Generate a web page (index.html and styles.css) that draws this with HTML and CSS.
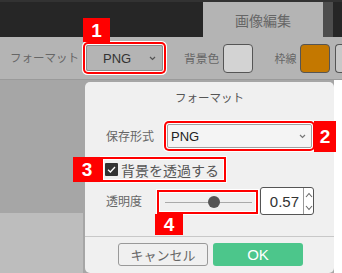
FILE: index.html
```html
<!DOCTYPE html>
<html lang="ja">
<head>
<meta charset="utf-8">
<link rel="stylesheet" href="styles.css">
</head>
<body>
<div class="top">
  <div class="tab">画像編集</div>
  <div class="tab-edge"></div>
</div>
<div class="toolbar">
  <span class="tlabel">フォーマット</span>
  <div class="tsel hl">
    <span class="tsel-text">PNG</span>
    <svg class="chev" width="7" height="5" viewBox="0 0 7 5"><path d="M1 1 L3.5 3.5 L6 1" fill="none" stroke="#555" stroke-width="1.2"/></svg>
    <span class="badge b1">1</span>
  </div>
  <span class="tlabel l2">背景色</span>
  <span class="swatch gray"></span>
  <span class="tlabel l3">枠線</span>
  <span class="swatch orange"></span>
  <span class="swatch third"></span>
</div>
<div class="main">
  <div class="left"><div class="left-a"></div><div class="left-b"></div></div>
  <div class="dialog">
    <div class="title">フォーマット</div>
    <div class="row r1">
      <span class="flabel w1">保存形式</span>
      <div class="fsel hl">
        <span>PNG</span>
        <svg class="chev" width="7" height="5" viewBox="0 0 7 5"><path d="M1 1 L3.5 3.5 L6 1" fill="none" stroke="#777" stroke-width="1.2"/></svg>
        <span class="badge b2">2</span>
      </div>
    </div>
    <div class="row r2">
      <label class="check box-hl">
        <span class="cb"><svg width="13" height="13" viewBox="0 0 13 13"><path d="M3 6.8 L5.4 9 L10 4" fill="none" stroke="#fff" stroke-width="1.3"/></svg></span>
        <span class="check-text">背景を透過する</span>
        <span class="badge b3">3</span>
      </label>
    </div>
    <div class="row r3">
      <span class="flabel w2">透明度</span>
      <div class="slider box-hl">
        <div class="track"></div>
        <div class="thumb"></div>
        <span class="badge b4">4</span>
      </div>
      <div class="num">
        <span class="num-val">0.57</span>
        <div class="spin">
          <svg width="8" height="6" viewBox="0 0 8 6"><path d="M1 5 L4 1.5 L7 5" fill="none" stroke="#666" stroke-width="1.1"/></svg>
          <svg width="8" height="6" viewBox="0 0 8 6"><path d="M1 1 L4 4.5 L7 1" fill="none" stroke="#666" stroke-width="1.1"/></svg>
        </div>
      </div>
    </div>
    <div class="footer">
      <button class="btn cancel">キャンセル</button>
      <button class="btn ok">OK</button>
    </div>
  </div>
  <div class="right"></div>
</div>
</body>
</html>
```

FILE: styles.css
```css
* { box-sizing: border-box; }
html, body {
  margin: 0;
  padding: 0;
}
body {
  width: 342px;
  height: 273px;
  overflow: hidden;
  font-family: "Liberation Sans", "Noto Sans CJK JP", sans-serif;
  background: #fff;
}
.top {
  height: 37px;
  background: #262626;
  border-top: 2px solid #323232;
  display: flex;
  justify-content: flex-end;
  padding-right: 9px;
}
.tab {
  width: 120px;
  background: #b4b4b4;
  color: #666;
  font-size: 14px;
  display: flex;
  align-items: center;
  justify-content: center;
  font-family: "Noto Sans CJK JP", sans-serif;
}
.tab-edge {
  width: 10px;
  background: #4d4d4d;
}
.toolbar {
  height: 43px;
  background: #b4b4b4;
  border-bottom: 1px solid #9a9a9a;
  display: flex;
  align-items: center;
  padding-left: 10px;
  white-space: nowrap;
}
.toolbar > * { flex: none; }
.tlabel {
  font-size: 11.5px;
  color: #666;
  font-family: "Noto Sans CJK JP", sans-serif;
  line-height: 1;
}
.l2 { margin-left: 21px; font-size: 11.8px; }
.l3 { margin-left: 21px; font-size: 11px; }
.tsel {
  position: relative;
  margin-left: 7px;
  width: 77px;
  height: 26px;
  border: 1px solid #8c8c8c;
  border-radius: 2px;
  display: flex;
  align-items: center;
  padding-left: 16px;
  padding-right: 6px;
  font-size: 13px;
  color: #333;
}
.tsel-text { flex: 1; }
.hl {
  box-shadow: 0 0 0 1px #fff, 0 0 0 3px #f00, 0 0 0 4px #fff;
}
.box-hl {
  border: 2px solid #f00;
  box-shadow: 0 0 0 1px #fff, inset 0 0 0 1px #fff;
}
.badge {
  position: absolute;
  background: #f00;
  color: #fff;
  font-family: "Liberation Sans", sans-serif;
  font-weight: bold;
  font-size: 19px;
  display: flex;
  align-items: center;
  justify-content: center;
  line-height: 1;
}
.b1 { left: -4px; bottom: 28px; width: 27px; height: 24px; }
.b2 { left: calc(100% + 3px); top: -4px; width: 22px; height: 31px; }
.b3 { left: -30px; top: -2px; width: 28px; height: 25px; }
.b4 { left: -4px; top: 22px; width: 28px; height: 21px; }
.swatch {
  width: 30px;
  height: 29px;
  border: 1px solid #555;
  border-radius: 4px;
  margin-left: 4px;
}
.gray { background: #d3d3d3; }
.orange { background: #c47800; }
.third {
  background: #c8c8c8;
  margin-left: 5px;
  width: 8px;
  border-right: none;
  border-radius: 4px 0 0 4px;
}
.main {
  display: flex;
  height: 193px;
  background: #a6a6a6;
}
.left {
  width: 83px;
  flex: none;
  display: flex;
  flex-direction: column;
}
.left-a { height: 133px; background: #a6a6a6; }
.left-b { flex: 1; background: #bdbdbd; }
.dialog {
  margin-left: 2px;
  margin-top: 2px;
  width: 249px;
  flex: none;
  height: 191px;
  background: #f0f0f0;
  border-radius: 5px;
  padding-left: 21px;
  font-family: "Noto Sans CJK JP", sans-serif;
}
.right {
  flex: 1;
  background: #fff;
}
.title {
  height: 30px;
  margin-left: -21px;
  display: flex;
  align-items: center;
  justify-content: center;
  font-size: 11.5px;
  color: #555;
}
.row {
  display: flex;
  align-items: center;
}
.row > * { flex: none; }
.flabel {
  font-size: 12px;
  color: #666;
  line-height: 1;
}
.w1 { width: 61px; }
.w2 { width: 51px; }
.r1 { margin-top: 12px; height: 24px; }
.fsel {
  position: relative;
  width: 145px;
  height: 24px;
  border: 1px solid #a0a0a0;
  border-radius: 2px;
  background: #f4f4f4;
  display: flex;
  align-items: center;
  justify-content: space-between;
  padding-left: 3px;
  padding-right: 5px;
  font-family: "Liberation Sans", sans-serif;
  font-size: 13px;
  color: #222;
}
.r2 { margin-top: 9px; margin-left: -5px; }
.check {
  position: relative;
  width: 125px;
  height: 25px;
  display: flex;
  align-items: center;
  padding-left: 2px;
}
.cb {
  width: 13px;
  height: 13px;
  background: #333;
  border-radius: 1px;
  display: flex;
  flex: none;
}
.check-text {
  margin-left: 3px;
  font-size: 14px;
  color: #555;
  line-height: 1;
  white-space: nowrap;
}
.r3 { margin-top: 5px; height: 28px; }
.slider {
  position: relative;
  width: 101px;
  height: 24px;
  margin-top: 1px;
}
.track {
  position: absolute;
  left: 6px;
  right: 4px;
  top: 10px;
  height: 1px;
  background: #aaa;
}
.thumb {
  position: absolute;
  left: 49px;
  top: 4px;
  width: 12px;
  height: 12px;
  border-radius: 50%;
  background: #555;
}
.num {
  margin-left: 2px;
  width: 54px;
  height: 28px;
  border: 1px solid #555;
  border-radius: 3px;
  background: #fff;
  display: flex;
  align-items: center;
}
.num-val {
  flex: 1;
  text-align: right;
  padding-right: 4px;
  font-family: "Liberation Sans", sans-serif;
  font-size: 15px;
  color: #333;
}
.spin {
  width: 10px;
  height: 100%;
  border-left: 1px solid #999;
  display: flex;
  flex-direction: column;
  justify-content: space-around;
  align-items: center;
}
.spin svg { display: block; }
.footer {
  margin-top: 21px;
  margin-left: -21px;
  border-top: 1px solid #c8c8c8;
  padding-top: 6px;
  padding-left: 33px;
  display: flex;
  gap: 5px;
}
.btn {
  width: 90px;
  height: 23px;
  border-radius: 3px;
  padding: 0;
  font-family: "Liberation Sans", "Noto Sans CJK JP", sans-serif;
  display: flex;
  align-items: center;
  justify-content: center;
}
.cancel {
  background: #f0f0f0;
  border: 1px solid #999;
  color: #666;
  font-size: 13px;
}
.ok {
  background: #4cc68b;
  border: none;
  color: #fff;
  font-size: 15px;
}
```
